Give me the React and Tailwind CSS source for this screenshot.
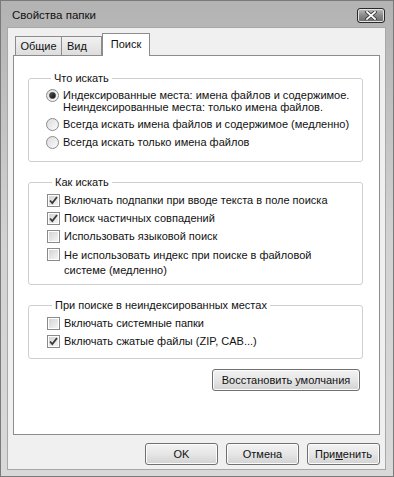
import React from 'react';

const Radio = ({ checked }) => (
  <span className="w-[13px] h-[13px] shrink-0 rounded-full border border-[#8a8a8a] bg-gradient-to-br from-[#dcdcdc] to-[#fbfbfb] flex items-center justify-center">
    {checked && <span className="w-[7px] h-[7px] rounded-full bg-gradient-to-br from-[#555] to-[#111] border border-[#333]" />}
  </span>
);

const Check = ({ checked }) => (
  <span className="w-[13px] h-[13px] shrink-0 border border-[#8a8a8a] bg-white flex items-center justify-center">
    <span className="w-[9px] h-[9px] bg-gradient-to-br from-[#d4d4d4] to-[#f4f4f4] flex items-center justify-center">
      {checked && (
        <svg width="9" height="9" viewBox="0 0 9 9">
          <path d="M1 4.5 L3.3 7 L8 1" fill="none" stroke="#3a3a3a" strokeWidth="1.8" />
        </svg>
      )}
    </span>
  </span>
);

const Option = ({ control, children, lead = 'leading-[13px]' }) => (
  <label className={`flex items-start gap-[4px] ${lead}`}>
    {control}
    <span>{children}</span>
  </label>
);

const Group = ({ title, className, children }) => (
  <fieldset className={`border border-[#cfcfcf] rounded-[3px] ${className}`}>
    <legend className="ml-[5px] px-[3px] leading-[14px]">{title}</legend>
    {children}
  </fieldset>
);

const Button = ({ className, children }) => (
  <button className={`h-[22px] border border-[#707070] rounded-[3px] bg-gradient-to-b from-[#f3f3f3] via-[#e6e6e6] to-[#d2d2d2] shadow-[inset_0_0_0_1px_#fcfcfc] leading-none ${className}`}>
    {children}
  </button>
);

export default function App() {
  return (
    <div
      className="w-[394px] h-[477px] bg-gradient-to-b from-[#b3b3b3] via-[#d2d2d2] to-[#d9d9d9] border border-[#7a7a7a] flex flex-col text-[#111] text-[11px]"
      style={{ fontFamily: '"Liberation Sans", Arial, sans-serif' }}
    >
      <div className="h-[26px] shrink-0 flex items-center justify-between pl-[11px] pr-[8px]">
        <span className="text-[11.5px] text-[#111] pt-[4px]">Свойства папки</span>
        <div className="w-[28px] h-[15px] mt-[3px] rounded-[3px] border border-[#2a2a2a] bg-gradient-to-b from-[#bdbdbd] via-[#8a8a8a] to-[#6a6a6a] shadow-[inset_0_0_0_1px_#e2e2e2] flex items-center justify-center">
          <svg width="12" height="9" viewBox="0 0 12 9">
            <path d="M2 1 L10 8 M10 1 L2 8" stroke="#333" strokeWidth="3.4" strokeLinecap="square" />
            <path d="M2 1 L10 8 M10 1 L2 8" stroke="#fff" strokeWidth="1.8" strokeLinecap="square" />
          </svg>
        </div>
      </div>
      <div className="ml-[6px] mr-[7px] mb-[6px] flex-1 bg-[#f0f0f0] border border-[#a8a8a8] px-[5px] pt-[4px] flex flex-col">
        <div className="flex items-end h-[23px] pl-[2px] relative z-10">
          <div className="h-[19px] w-[47px] border border-[#8c8c8c] border-b-0 bg-gradient-to-b from-[#f2f2f2] to-[#dddddd] flex items-center justify-center">Общие</div>
          <div className="h-[19px] w-[40px] pl-[5px] border border-[#8c8c8c] border-b-0 border-l-0 bg-gradient-to-b from-[#f2f2f2] to-[#dddddd] flex items-center">Вид</div>
          <div className="h-[23px] -mb-[1px] w-[48px] border border-[#8c8c8c] border-b-0 bg-white flex items-center justify-center pb-[1px]">Поиск</div>
        </div>
        <div className="h-[380px] bg-white border border-[#8c8c8c] pl-[14px] pr-[16px] pt-[15px] flex flex-col">
          <Group title="Что искать" className="h-[91px] pl-[17px] pt-[4px]">
            <div className="flex flex-col gap-[5px]">
              <Option control={<Radio checked />} lead="leading-[12px]">
                Индексированные места: имена файлов и содержимое.<br />
                Неиндексированные места: только имена файлов.
              </Option>
              <Option control={<Radio />}>Всегда искать имена файлов и содержимое (медленно)</Option>
              <Option control={<Radio />}>Всегда искать только имена файлов</Option>
            </div>
          </Group>
          <Group title="Как искать" className="mt-[13px] h-[110px] pl-[18px] pt-[5px]">
            <div className="flex flex-col gap-[5px]">
              <Option control={<Check checked />}>Включать подпапки при вводе текста в поле поиска</Option>
              <Option control={<Check checked />}>Поиск частичных совпадений</Option>
              <Option control={<Check />}>Использовать языковой поиск</Option>
              <Option control={<Check />} lead="leading-[15px]">
                Не использовать индекс при поиске в файловой<br />системе (медленно)
              </Option>
            </div>
          </Group>
          <Group title="При поиске в неиндексированных местах" className="mt-[13px] h-[61px] pl-[18px] pt-[5px]">
            <div className="flex flex-col gap-[5px]">
              <Option control={<Check />}>Включать системные папки</Option>
              <Option control={<Check checked />}>Включать сжатые файлы (ZIP, CAB...)</Option>
            </div>
          </Group>
          <div className="flex justify-end mt-[10px] pr-[3px]">
            <Button className="w-[148px]">Восстановить умолчания</Button>
          </div>
        </div>
        <div className="flex justify-end gap-[8px] mt-[8px]">
          <Button className="w-[73px]">OK</Button>
          <Button className="w-[73px]">Отмена</Button>
          <Button className="w-[73px]">При<u>м</u>енить</Button>
        </div>
      </div>
    </div>
  );
}
